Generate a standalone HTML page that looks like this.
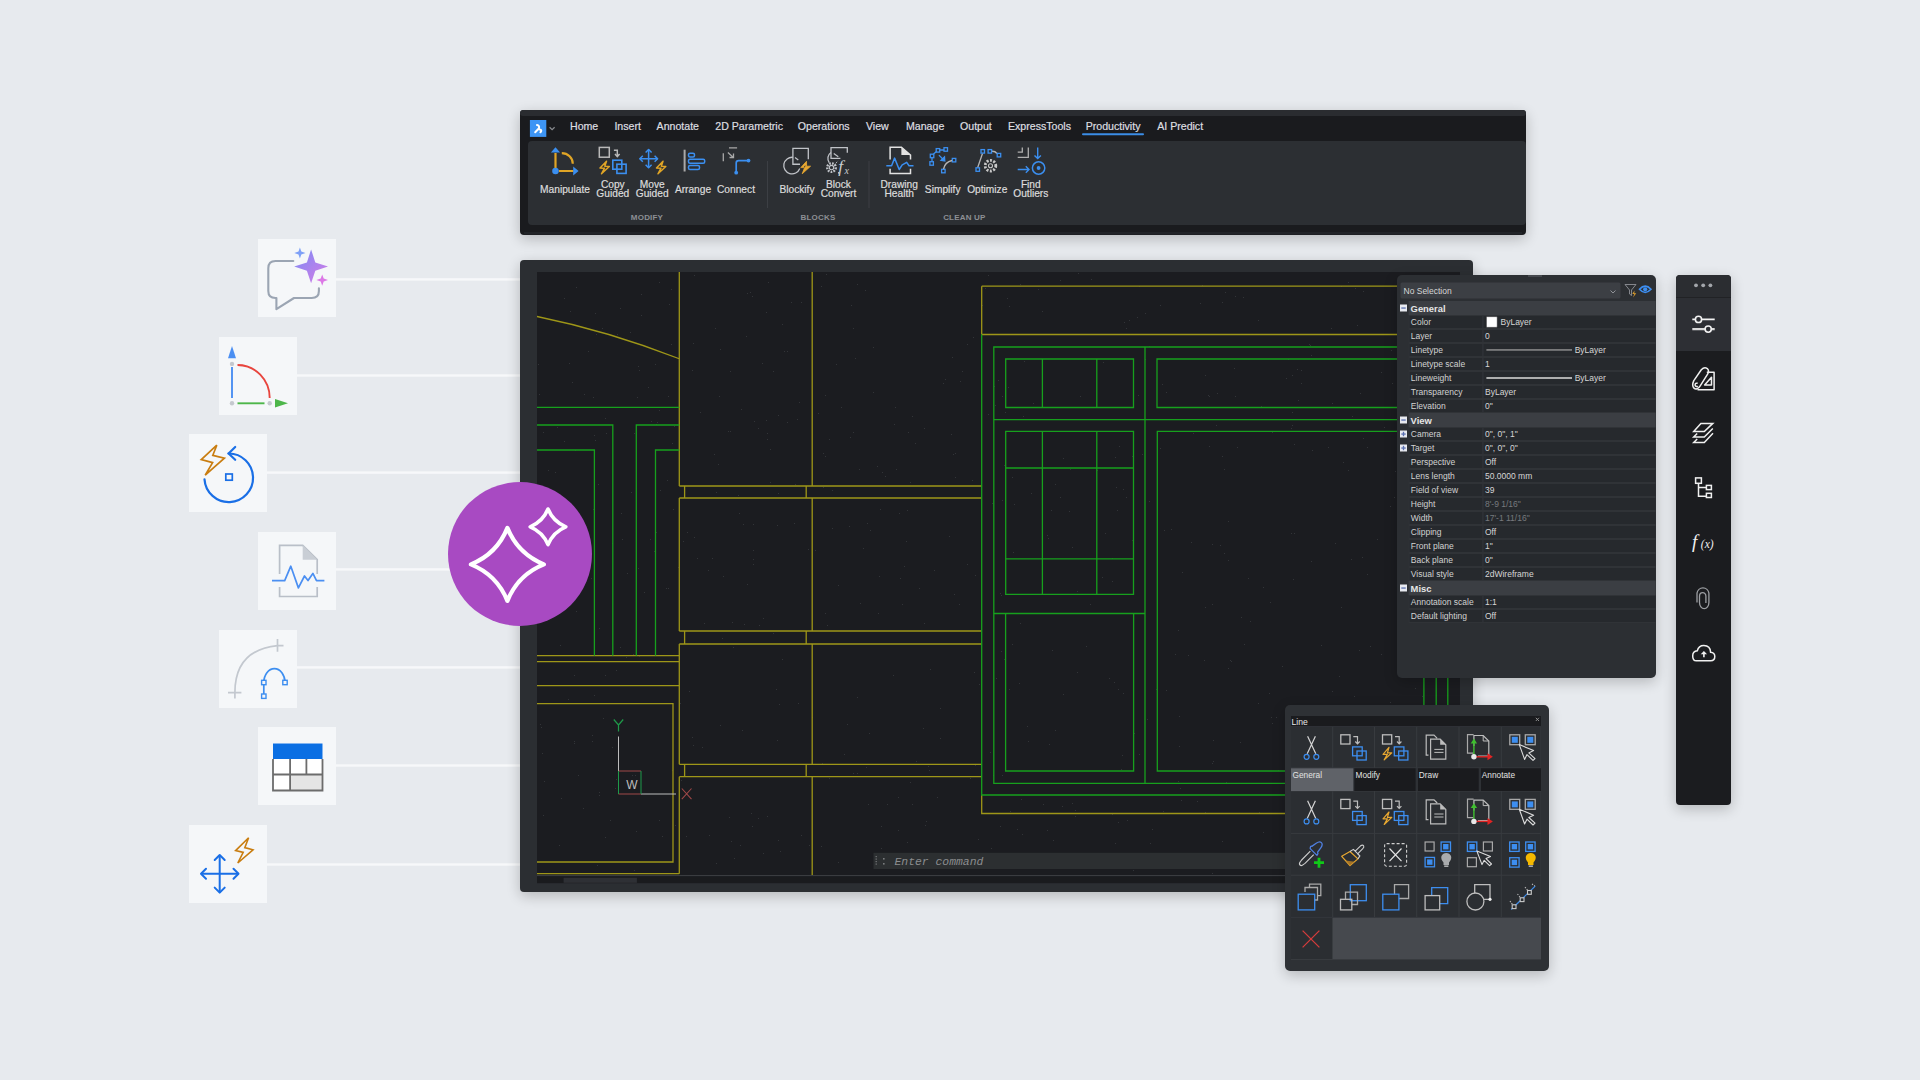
<!DOCTYPE html>
<html><head><meta charset="utf-8">
<style>
html,body{margin:0;padding:0;width:1920px;height:1080px;overflow:hidden;background:#e7eaee;}
svg{display:block;font-family:"Liberation Sans",sans-serif;}
</style></head>
<body>
<svg width="1920" height="1080" viewBox="0 0 1920 1080">
<defs>
<filter id="sh" filterUnits="userSpaceOnUse" x="0" y="0" width="1920" height="1080" color-interpolation-filters="sRGB"><feGaussianBlur in="SourceAlpha" stdDeviation="7"/><feOffset dy="4"/><feComponentTransfer><feFuncA type="linear" slope="0.22"/></feComponentTransfer><feMerge><feMergeNode/><feMergeNode in="SourceGraphic"/></feMerge></filter>
<linearGradient id="spk" x1="0" y1="0" x2="1" y2="1"><stop offset="0" stop-color="#7b8cf5"/><stop offset="1" stop-color="#d77be6"/></linearGradient>
</defs>
<rect width="1920" height="1080" fill="#e7eaee"/>

<!-- connector lines -->
<g fill="#f7f8fa">
<rect x="336" y="278.2" width="184" height="2.4"/>
<rect x="297" y="374.3" width="223" height="2.4"/>
<rect x="267" y="471.4" width="253" height="2.4"/>
<rect x="336" y="568.2" width="184" height="2.4"/>
<rect x="297" y="666.2" width="223" height="2.4"/>
<rect x="336" y="764.3" width="184" height="2.4"/>
<rect x="267" y="863.3" width="253" height="2.4"/>
</g>
<!-- tiles -->
<g fill="#f5f7f9">
<rect x="258" y="239" width="78" height="78"/>
<rect x="219" y="337" width="78" height="78"/>
<rect x="189" y="434" width="78" height="78"/>
<rect x="258" y="532" width="78" height="78"/>
<rect x="219" y="630" width="78" height="78"/>
<rect x="258" y="727" width="78" height="78"/>
<rect x="189" y="825" width="78" height="78"/>
</g>


<!-- tile icons -->
<g id="ic1">
<path d="M293.3,261 H275.5 Q268.3,261 268.3,268.2 V291 Q268.3,298 275.5,298 H276.4 V309.2 L294,298 H311.7 Q318.9,298 318.9,291 V288.3" fill="none" stroke="#9ba5b3" stroke-width="2.1" stroke-linejoin="round" stroke-linecap="round"/>
<path d="M311.1,249.4 L315.3,262.4 L328,266.6 L315.3,270.8 L311.1,283.3 L306.9,270.8 L294.2,266.6 L306.9,262.4 Z" fill="url(#spk)"/>
<path d="M299.9,247.4 L301.3,251.6 L305.5,253 L301.3,254.4 L299.9,258.6 L298.5,254.4 L294.3,253 L298.5,251.6 Z" fill="#7ea0f7"/>
<path d="M322.2,274.4 L323.7,278.6 L328,280.1 L323.7,281.6 L322.2,285.8 L320.7,281.6 L316.4,280.1 L320.7,278.6 Z" fill="#dc78e6"/>
</g>
<g id="ic2">
<path d="M232,346 L236,358.3 L228,358.3 Z" fill="#4b8ff2"/>
<circle cx="232" cy="363.9" r="2.2" fill="#c4c8ce"/>
<line x1="232" y1="367" x2="232" y2="398" stroke="#4b8ff2" stroke-width="1.9"/>
<circle cx="232" cy="403.3" r="2.2" fill="#c4c8ce"/>
<line x1="237.5" y1="403.3" x2="264.5" y2="403.3" stroke="#4db64a" stroke-width="1.9"/>
<circle cx="269.7" cy="403.3" r="2.2" fill="#c4c8ce"/>
<path d="M275,399 L288,403.3 L275,407.6 Z" fill="#4db64a"/>
<path d="M237.5,365 A32.2,33 0 0 1 269.7,398" fill="none" stroke="#e8453e" stroke-width="1.9"/>
</g>
<g id="ic3">
<path d="M228.4,453.5 A24.3,24.3 0 1 1 204.5,479.4" fill="none" stroke="#1a6fe6" stroke-width="2.2" stroke-linecap="round"/>
<path d="M235.2,447 L228.6,453.5 L235.2,459.8" fill="none" stroke="#1a6fe6" stroke-width="2.2" stroke-linecap="round" stroke-linejoin="round"/>
<rect x="225.8" y="474" width="6.5" height="6.2" fill="none" stroke="#1a6fe6" stroke-width="1.7"/>
<path d="M216.8,445.2 L201.3,459.6 L212.6,462.6 L205.2,475.2 L224.4,458.2 L212.8,455.3 Z" fill="none" stroke="#c97d10" stroke-width="1.7" stroke-linejoin="miter"/>
</g>
<g id="ic4">
<path d="M279.6,574 V545.3 H302.7 L317.2,559.7 V574 M279.6,587 V596.5 H317.2 V587" fill="none" stroke="#b9bfc8" stroke-width="1.7"/>
<path d="M302.7,545.3 L317.2,559.7 H302.7 Z" fill="#c9ced5"/>
<path d="M272,580.6 H284.7 L290.8,566.2 L298.4,587.9 L304.5,576 L308,580.6 L312.9,573.4 L316.5,580.6 H324.4" fill="none" stroke="#4b8ff2" stroke-width="1.7" stroke-linejoin="round"/>
</g>
<g id="ic5">
<path d="M234.9,692.6 Q234.9,650 277.5,645.6" fill="none" stroke="#c3c8cf" stroke-width="1.7"/>
<path d="M228,692.6 H241.4 M277.5,639 V651.8 M234.9,692 V698.5 M277,645.6 H283.5" fill="none" stroke="#c3c8cf" stroke-width="1.7"/>
<path d="M263.8,682.5 A10.6,13.8 0 0 1 285,682.5 M263.8,682.5 V696" fill="none" stroke="#3d8ef0" stroke-width="1.7"/>
<rect x="261.6" y="680.3" width="4.4" height="4.4" fill="#f5f6f8" stroke="#3d8ef0" stroke-width="1.4"/>
<rect x="282.8" y="680.3" width="4.4" height="4.4" fill="#f5f6f8" stroke="#3d8ef0" stroke-width="1.4"/>
<rect x="261.6" y="694" width="4.4" height="4.4" fill="#f5f6f8" stroke="#3d8ef0" stroke-width="1.4"/>
</g>
<g id="ic6">
<rect x="273" y="743.5" width="49.5" height="47" fill="#ffffff"/>
<rect x="273" y="743.5" width="49.5" height="15.5" fill="#0b6fe3"/>
<rect x="290.1" y="774.5" width="32.4" height="16" fill="#e5e5e5"/>
<path d="M273,759 V790.5 H322.5 V759 M273,774.5 H322.5 M290.1,759 V790.5 M306.4,759 V774.5" fill="none" stroke="#6c6c6c" stroke-width="1.8"/>
</g>
<g id="ic7">
<path d="M201,873.8 H238.5 M219.7,855 V892.6" fill="none" stroke="#1a6fe6" stroke-width="2"/>
<path d="M206,868.8 L201,873.8 L206,878.8 M233.5,868.8 L238.5,873.8 L233.5,878.8 M214.7,860 L219.7,855 L224.7,860 M214.7,887.6 L219.7,892.6 L224.7,887.6" fill="none" stroke="#1a6fe6" stroke-width="2" stroke-linecap="round" stroke-linejoin="round"/>
<path d="M248.6,837.7 L235.6,850.6 L243.2,852.4 L237.8,863 L253,849.8 L244.8,847.6 Z" fill="none" stroke="#c97d10" stroke-width="1.6"/>
</g>

<!-- RIBBON -->
<g filter="url(#sh)">
<rect x="520" y="110" width="1006" height="125" rx="4" fill="#1a1b1e"/>
</g>
<rect x="520" y="110" width="1006" height="6" rx="3" fill="#2a2c30"/>
<rect x="524" y="232" width="998" height="2.6" fill="#222428"/>
<rect x="528" y="141" width="998" height="84" rx="4" fill="#2c2f33"/>


<!-- ribbon logo & tabs -->
<rect x="529.9" y="120" width="16.4" height="16.9" fill="#3d95f5"/>
<path d="M537,125.1 Q539.6,125.3 539,128.2 L535.2,132.3 M539.6,129.6 Q541.8,129.8 541.1,131.4 L540.4,132.3" fill="none" stroke="#ffffff" stroke-width="2" stroke-linecap="round" stroke-linejoin="round"/>
<path d="M549.6,127.3 L552.1,129.6 L554.6,127.3" fill="none" stroke="#8a8c90" stroke-width="1.2"/>
<g font-size="10.6" fill="#dedfe0" stroke="#dedfe0" stroke-width="0.2">
<text x="570" y="130">Home</text>
<text x="614.4" y="130">Insert</text>
<text x="656.6" y="130">Annotate</text>
<text x="715.3" y="130">2D Parametric</text>
<text x="797.8" y="130">Operations</text>
<text x="866" y="130">View</text>
<text x="906" y="130">Manage</text>
<text x="960" y="130">Output</text>
<text x="1008" y="130">ExpressTools</text>
<text x="1085.7" y="130">Productivity</text>
<text x="1157.2" y="130">AI Predict</text>
</g>
<rect x="1082" y="133.2" width="62" height="2" rx="1" fill="#3b8de6"/>
<!-- ribbon labels -->
<g font-size="10.2" fill="#dcdcdc" stroke="#dcdcdc" stroke-width="0.2" text-anchor="middle">
<text x="565" y="192.8">Manipulate</text>
<text x="612.8" y="188.2">Copy</text><text x="612.8" y="196.8">Guided</text>
<text x="652.2" y="188.2">Move</text><text x="652.2" y="196.8">Guided</text>
<text x="693" y="192.8">Arrange</text>
<text x="736" y="192.8">Connect</text>
<text x="797" y="192.8">Blockify</text>
<text x="838.5" y="188.2">Block</text><text x="838.5" y="196.8">Convert</text>
<text x="899.2" y="188.2">Drawing</text><text x="899.2" y="196.8">Health</text>
<text x="942.7" y="192.8">Simplify</text>
<text x="987.3" y="192.8">Optimize</text>
<text x="1030.8" y="188.2">Find</text><text x="1030.8" y="196.8">Outliers</text>
</g>
<g font-size="8" font-weight="bold" fill="#8d9095" text-anchor="middle" letter-spacing="0.2">
<text x="647" y="219.8">MODIFY</text>
<text x="818" y="219.8">BLOCKS</text>
<text x="964.4" y="219.8">CLEAN UP</text>
</g>
<rect x="767" y="161" width="1" height="47" fill="#3c3f44"/>
<rect x="868.5" y="161" width="1" height="47" fill="#3c3f44"/>
<!-- ribbon icons -->
<g id="manip">
<path d="M555.5,153 V168 M559,171 H573.5" stroke="#e0a526" stroke-width="2.2" fill="none"/>
<path d="M561.8,153.2 A11,10.5 0 0 1 572.8,163.7" stroke="#e0a526" stroke-width="2.2" fill="none"/>
<path d="M555.5,147.2 L560.1,152.6 H550.9 Z M578.6,171 L573.2,175.6 V166.4 Z" fill="#3b8ff0"/>
<circle cx="555.5" cy="171" r="3.3" fill="#3b8ff0"/>
</g>
<g id="copyg">
<rect x="599.3" y="147.4" width="10" height="9.8" fill="none" stroke="#b9b9b9" stroke-width="1.5"/>
<path d="M613.9,150.3 H617.3 V156" fill="none" stroke="#b9b9b9" stroke-width="1.5"/>
<path d="M615,154 L617.3,156.6 L619.6,154" fill="none" stroke="#b9b9b9" stroke-width="1.5"/>
<path d="M606.5,161.2 L600,168 L604.5,168.2 L601.5,173.8 L609.3,166.5 L604.8,166.3 Z" fill="none" stroke="#e0a526" stroke-width="1.5" stroke-linejoin="round"/>
<rect x="612.8" y="160.2" width="9" height="9" fill="none" stroke="#3b8ff0" stroke-width="1.6"/>
<rect x="616.9" y="164.2" width="9.2" height="9.2" fill="none" stroke="#3b8ff0" stroke-width="1.6"/>
</g>
<g id="moveg">
<path d="M639.8,158.7 H657.6 M648.6,149.5 V167.8" stroke="#3b8ff0" stroke-width="1.5" fill="none"/>
<path d="M642.8,155.7 L639.8,158.7 L642.8,161.7 M654.6,155.7 L657.6,158.7 L654.6,161.7 M645.6,152.5 L648.6,149.5 L651.6,152.5 M645.6,164.8 L648.6,167.8 L651.6,164.8" stroke="#3b8ff0" stroke-width="1.5" fill="none" stroke-linejoin="round"/>
<path d="M663,161.2 L656.5,168 L661,168.2 L658,173.8 L665.8,166.5 L661.3,166.3 Z" fill="none" stroke="#e0a526" stroke-width="1.5" stroke-linejoin="round"/>
</g>
<g id="arrange">
<rect x="683.6" y="149.7" width="2" height="21.8" fill="#a9a9a9"/>
<rect x="688.5" y="153.3" width="6" height="3.6" rx="1.5" fill="none" stroke="#3b8ff0" stroke-width="1.5"/>
<rect x="688.5" y="159.3" width="16.2" height="4" rx="1.5" fill="none" stroke="#3b8ff0" stroke-width="1.5"/>
<rect x="688.5" y="165.6" width="11" height="3.8" rx="1.5" fill="none" stroke="#3b8ff0" stroke-width="1.5"/>
</g>
<g id="connect">
<path d="M729,147.8 H737.1 M723.3,153.2 V161.2 M727.9,152.6 L733.1,157.2 M733.5,153.5 V157.5 H729.5" stroke="#a9a9a9" stroke-width="1.3" fill="none"/>
<path d="M736.2,172.7 V163 Q736.2,160.6 738.6,160.6 H748.5" stroke="#3b8ff0" stroke-width="1.7" fill="none"/>
<circle cx="736.2" cy="172.7" r="1.9" fill="#3b8ff0"/><circle cx="748.5" cy="160.6" r="1.9" fill="#3b8ff0"/>
</g>
<g id="blockify">
<path d="M800,164.25 H792.9 V148.4 H808.3 V159.3" stroke="#c0c3c8" stroke-width="1.3" fill="none"/>
<path d="M792.9,157.3 A8.3,8.3 0 1 0 799.8,168.6" stroke="#c0c3c8" stroke-width="1.3" fill="none"/>
<path d="M795,157.6 L798.3,160.1" stroke="#c0c3c8" stroke-width="1.2"/>
<path d="M806.5,161.3 L800.8,167.6 L804.6,167.6 L802.2,173.8 L810.6,166.2 L806.6,166.2 Z" fill="#e8a831" stroke="#e8a831" stroke-width="0.8" stroke-linejoin="round"/>
<path d="M805.2,165.6 L804.3,167.4" stroke="#2c2f33" stroke-width="0.9"/>
</g>
<g id="blockconv">
<path d="M840.4,158.4 H831 V147.6 H847.3 V152.8" stroke="#c0c3c8" stroke-width="1.3" fill="none"/>
<path d="M831,152.5 A7.2,7.2 0 0 0 829.2,162.6" stroke="#c0c3c8" stroke-width="1.3" fill="none"/>
<path d="M833.75,153.4 L838.3,156.75" stroke="#c0c3c8" stroke-width="1.2"/>
<circle cx="831.5" cy="167.6" r="4.3" fill="none" stroke="#c0c3c8" stroke-width="2.4" stroke-dasharray="1.7 1.2"/>
<circle cx="831.5" cy="167.6" r="2.2" fill="none" stroke="#c0c3c8" stroke-width="1.1"/>
<path d="M834.6,164.7 L837.9,160.9" stroke="#c0c3c8" stroke-width="1" stroke-dasharray="1.4 1"/>
<text x="838.2" y="171.6" font-family="Liberation Serif" font-style="italic" font-size="17.5" fill="#c8cbd0">f</text>
<text x="844.6" y="173.6" font-family="Liberation Serif" font-style="italic" font-size="10" fill="#c8cbd0">x</text>
<circle cx="838.8" cy="172.8" r="0.9" fill="#c8cbd0"/>
</g>
<g id="dhealth">
<path d="M890.1,159.6 V147.3 H901.4 L910.5,155.1 V159.6 M890.1,168.7 V173.5 H910.5 V168.7" stroke="#e2e2e2" stroke-width="1.5" fill="none"/>
<path d="M901.4,147.3 L910.5,155.1 H901.4 Z" fill="#e2e2e2"/>
<path d="M886.3,165.7 H891.6 L894.6,158.1 L899.2,169.5 L902.2,164.9 L906.7,162.4 L909,165.7 H913.5" stroke="#3b8ff0" stroke-width="1.5" fill="none" stroke-linejoin="round"/>
</g>
<g id="simplify" stroke="#3b8ff0" fill="none" stroke-width="1.3">
<path d="M932,161.5 V158 M933.5,154 L936.5,151.5 M940,150 H944" />
<rect x="929.9" y="161.7" width="3.5" height="3.5"/><rect x="930.3" y="154.2" width="3.5" height="3.5"/>
<rect x="936.2" y="148.6" width="3.5" height="3.5"/><rect x="944" y="147.7" width="3.5" height="3.5"/>
<rect x="941.6" y="169.3" width="3.5" height="3.5"/><rect x="952.3" y="158.4" width="3.5" height="3.5"/>
<path d="M938.9,155.1 L943.5,159.8"/><path d="M944.8,161 L944.5,157 L941,160.3 Z" fill="#3b8ff0"/>
<path d="M943.5,169 Q945,162 952,160.5" stroke="#b5b5b5"/>
</g>
<g id="optimize">
<path d="M977.7,167.5 L982.5,153.5 M991.6,151.3 Q995,151 997,153.5" stroke="#b5b5b5" stroke-width="1.3" fill="none"/>
<g stroke="#3b8ff0" stroke-width="1.3" fill="none">
<rect x="976" y="167.8" width="3.5" height="3.5"/><rect x="981" y="149.6" width="3.5" height="3.5"/>
<rect x="988.1" y="149.6" width="3.5" height="3.5"/><rect x="997.2" y="153.4" width="3.5" height="3.5"/>
</g>
<circle cx="990.5" cy="165.7" r="5.3" fill="none" stroke="#c8c8c8" stroke-width="2.8" stroke-dasharray="2 1.4"/>
<circle cx="990.5" cy="165.7" r="2" fill="none" stroke="#c8c8c8" stroke-width="1.1"/>
</g>
<g id="findout">
<path d="M1017.7,152.1 H1022.3 V147.6 M1017.7,157.4 H1028.3 V147.6" stroke="#b0b0b0" stroke-width="1.3" fill="none"/>
<path d="M1037.7,147.6 V158.5 M1034.5,155.4 L1037.7,158.6 L1040.9,155.4 M1017.7,169.5 H1029 M1025.8,166.3 L1029,169.5 L1025.8,172.7" stroke="#3b8ff0" stroke-width="1.4" fill="none"/>
<circle cx="1038.6" cy="168" r="6.2" fill="none" stroke="#3b8ff0" stroke-width="1.5"/>
<circle cx="1038.6" cy="168" r="1.9" fill="#3b8ff0"/>
</g>

<!-- CANVAS PANEL -->
<g filter="url(#sh)">
<rect x="520" y="260" width="953" height="632" rx="4" fill="#2b2e32"/>
</g>
<rect x="537" y="272" width="923" height="604" fill="#1b1c20"/>


<!-- canvas drawing -->
<svg x="537" y="272" width="923" height="612" viewBox="537 272 923 612" overflow="hidden">
<path d="M836 364h1v1h-1zM1137 317h1v1h-1zM1031 493h1v1h-1zM591 578h1v1h-1zM572 534h1v1h-1zM602 328h1v1h-1zM929 770h1v1h-1zM652 407h1v1h-1zM1115 843h1v1h-1zM1069 511h1v1h-1zM1436 301h1v1h-1zM1328 447h1v1h-1zM671 344h1v1h-1zM822 763h1v1h-1zM704 623h1v1h-1zM1126 497h1v1h-1zM1042 311h1v1h-1zM593 397h1v1h-1zM1164 530h1v1h-1zM827 625h1v1h-1zM955 453h1v1h-1zM1269 693h1v1h-1zM763 618h1v1h-1zM1021 799h1v1h-1zM1209 446h1v1h-1zM1440 344h1v1h-1zM923 728h1v1h-1zM678 567h1v1h-1zM574 675h1v1h-1zM1241 617h1v1h-1zM1343 462h1v1h-1zM1178 630h1v1h-1zM1072 547h1v1h-1zM1311 841h1v1h-1zM974 672h1v1h-1zM594 695h1v1h-1zM1133 870h1v1h-1zM1294 444h1v1h-1zM893 675h1v1h-1zM559 550h1v1h-1zM693 343h1v1h-1zM592 735h1v1h-1zM657 422h1v1h-1zM898 797h1v1h-1zM612 543h1v1h-1zM1043 804h1v1h-1zM1292 792h1v1h-1zM794 523h1v1h-1zM868 804h1v1h-1zM1419 364h1v1h-1zM700 412h1v1h-1zM753 564h1v1h-1zM1080 431h1v1h-1zM542 525h1v1h-1zM878 613h1v1h-1zM1415 688h1v1h-1zM1012 644h1v1h-1zM1160 305h1v1h-1zM1366 742h1v1h-1zM1343 753h1v1h-1zM899 513h1v1h-1zM633 654h1v1h-1zM595 313h1v1h-1zM730 371h1v1h-1zM851 305h1v1h-1zM538 364h1v1h-1zM631 492h1v1h-1zM561 798h1v1h-1zM1103 362h1v1h-1zM770 482h1v1h-1zM873 347h1v1h-1zM1319 870h1v1h-1zM967 564h1v1h-1zM617 334h1v1h-1zM853 432h1v1h-1zM1301 370h1v1h-1zM559 845h1v1h-1zM1024 361h1v1h-1zM1038 289h1v1h-1zM1024 861h1v1h-1zM1332 691h1v1h-1zM778 493h1v1h-1zM692 737h1v1h-1zM1028 741h1v1h-1zM841 407h1v1h-1zM1285 865h1v1h-1zM1322 757h1v1h-1zM1291 718h1v1h-1zM747 584h1v1h-1zM865 290h1v1h-1zM564 441h1v1h-1zM776 689h1v1h-1zM1418 542h1v1h-1zM1400 867h1v1h-1zM1417 492h1v1h-1zM741 409h1v1h-1zM719 396h1v1h-1zM1112 814h1v1h-1zM1311 561h1v1h-1zM1139 754h1v1h-1zM616 670h1v1h-1zM1375 743h1v1h-1zM1228 560h1v1h-1zM702 747h1v1h-1zM844 754h1v1h-1zM1432 511h1v1h-1zM907 842h1v1h-1zM1205 375h1v1h-1zM655 364h1v1h-1zM1370 758h1v1h-1zM672 770h1v1h-1zM1440 668h1v1h-1zM860 603h1v1h-1zM659 282h1v1h-1zM1431 663h1v1h-1zM1022 834h1v1h-1zM937 797h1v1h-1zM1298 400h1v1h-1zM770 449h1v1h-1zM759 625h1v1h-1zM777 525h1v1h-1zM659 820h1v1h-1zM863 548h1v1h-1zM1075 816h1v1h-1zM925 825h1v1h-1zM1000 593h1v1h-1zM1020 284h1v1h-1zM943 383h1v1h-1zM542 753h1v1h-1zM697 558h1v1h-1zM1205 607h1v1h-1zM838 585h1v1h-1zM1049 744h1v1h-1zM636 610h1v1h-1zM767 439h1v1h-1zM1248 578h1v1h-1zM1055 730h1v1h-1zM1377 539h1v1h-1zM1102 577h1v1h-1zM1009 689h1v1h-1zM954 594h1v1h-1zM978 839h1v1h-1zM1181 800h1v1h-1zM1405 429h1v1h-1zM1053 840h1v1h-1zM1311 355h1v1h-1zM650 539h1v1h-1zM605 418h1v1h-1zM605 675h1v1h-1zM1259 812h1v1h-1zM680 703h1v1h-1zM1145 359h1v1h-1zM1350 854h1v1h-1zM740 845h1v1h-1zM904 566h1v1h-1zM1449 773h1v1h-1zM687 532h1v1h-1zM1012 477h1v1h-1zM718 464h1v1h-1zM1202 285h1v1h-1zM1048 538h1v1h-1zM555 472h1v1h-1zM1112 581h1v1h-1zM597 865h1v1h-1zM1263 857h1v1h-1zM634 433h1v1h-1zM574 741h1v1h-1zM787 351h1v1h-1zM926 821h1v1h-1zM1291 428h1v1h-1zM675 825h1v1h-1zM1063 694h1v1h-1zM620 308h1v1h-1zM1171 529h1v1h-1zM605 837h1v1h-1zM1122 755h1v1h-1zM615 788h1v1h-1zM599 792h1v1h-1zM955 477h1v1h-1zM1047 830h1v1h-1zM784 351h1v1h-1zM1023 416h1v1h-1zM639 370h1v1h-1zM584 394h1v1h-1zM825 456h1v1h-1zM1237 447h1v1h-1zM998 380h1v1h-1zM857 284h1v1h-1zM768 282h1v1h-1zM1212 604h1v1h-1zM712 558h1v1h-1zM1398 337h1v1h-1zM1291 533h1v1h-1zM993 775h1v1h-1zM900 578h1v1h-1zM1171 863h1v1h-1zM853 773h1v1h-1zM1188 655h1v1h-1zM910 482h1v1h-1zM588 351h1v1h-1zM603 718h1v1h-1zM773 371h1v1h-1zM616 779h1v1h-1zM1339 676h1v1h-1zM797 419h1v1h-1zM808 549h1v1h-1zM683 541h1v1h-1zM780 851h1v1h-1zM1433 602h1v1h-1zM763 853h1v1h-1zM823 487h1v1h-1zM539 502h1v1h-1zM975 575h1v1h-1zM723 576h1v1h-1zM543 432h1v1h-1zM621 513h1v1h-1zM576 287h1v1h-1zM818 413h1v1h-1zM1077 591h1v1h-1zM1228 668h1v1h-1zM1197 801h1v1h-1zM896 469h1v1h-1zM1444 363h1v1h-1zM1204 660h1v1h-1zM578 775h1v1h-1zM1359 650h1v1h-1zM1213 761h1v1h-1zM666 588h1v1h-1zM1002 775h1v1h-1zM1278 770h1v1h-1zM1075 810h1v1h-1zM1166 690h1v1h-1zM750 292h1v1h-1zM660 490h1v1h-1zM635 775h1v1h-1zM1052 650h1v1h-1zM1114 682h1v1h-1zM988 275h1v1h-1zM1272 723h1v1h-1zM1001 595h1v1h-1zM1145 313h1v1h-1zM1216 425h1v1h-1zM606 433h1v1h-1zM1209 396h1v1h-1zM1219 859h1v1h-1zM992 503h1v1h-1zM979 684h1v1h-1zM1244 644h1v1h-1zM1129 320h1v1h-1zM674 426h1v1h-1zM1222 456h1v1h-1zM1060 280h1v1h-1zM594 435h1v1h-1zM1156 689h1v1h-1zM1160 448h1v1h-1zM1013 552h1v1h-1zM967 344h1v1h-1zM1360 393h1v1h-1zM1438 836h1v1h-1zM554 549h1v1h-1zM1292 855h1v1h-1zM951 434h1v1h-1zM731 841h1v1h-1zM732 622h1v1h-1zM668 588h1v1h-1zM1415 353h1v1h-1zM1293 579h1v1h-1zM1354 696h1v1h-1zM751 813h1v1h-1zM985 288h1v1h-1zM541 569h1v1h-1zM953 454h1v1h-1zM667 480h1v1h-1zM829 778h1v1h-1zM540 724h1v1h-1zM1310 345h1v1h-1zM1390 702h1v1h-1zM1367 447h1v1h-1zM880 509h1v1h-1zM1457 627h1v1h-1zM870 530h1v1h-1zM791 302h1v1h-1zM632 775h1v1h-1zM801 835h1v1h-1zM767 433h1v1h-1zM1008 387h1v1h-1zM881 848h1v1h-1zM1352 761h1v1h-1zM1118 822h1v1h-1zM1403 603h1v1h-1zM1200 303h1v1h-1zM1212 544h1v1h-1zM1230 660h1v1h-1zM801 302h1v1h-1zM1391 350h1v1h-1zM972 480h1v1h-1zM812 717h1v1h-1zM1436 429h1v1h-1zM1142 454h1v1h-1zM1051 510h1v1h-1zM692 370h1v1h-1zM729 817h1v1h-1zM995 405h1v1h-1zM1372 872h1v1h-1zM952 357h1v1h-1zM715 328h1v1h-1zM853 328h1v1h-1zM758 428h1v1h-1zM1062 806h1v1h-1zM1228 521h1v1h-1zM919 588h1v1h-1zM885 476h1v1h-1zM595 440h1v1h-1zM1428 349h1v1h-1zM1001 651h1v1h-1zM1332 403h1v1h-1zM787 422h1v1h-1zM906 541h1v1h-1zM1416 783h1v1h-1zM1341 286h1v1h-1zM568 699h1v1h-1zM1362 557h1v1h-1zM1078 273h1v1h-1zM898 830h1v1h-1zM1298 787h1v1h-1zM1432 422h1v1h-1zM638 366h1v1h-1zM1019 683h1v1h-1zM1404 707h1v1h-1zM1134 733h1v1h-1zM959 604h1v1h-1zM574 743h1v1h-1zM752 826h1v1h-1zM1132 456h1v1h-1zM656 424h1v1h-1zM1123 693h1v1h-1zM641 315h1v1h-1zM1020 623h1v1h-1zM895 407h1v1h-1zM1091 279h1v1h-1zM815 550h1v1h-1zM1420 660h1v1h-1zM1351 559h1v1h-1zM754 421h1v1h-1zM1422 696h1v1h-1zM821 286h1v1h-1zM996 678h1v1h-1zM924 428h1v1h-1zM1152 829h1v1h-1zM747 293h1v1h-1zM849 526h1v1h-1zM1166 392h1v1h-1zM1271 717h1v1h-1zM1002 396h1v1h-1zM1430 460h1v1h-1zM1292 412h1v1h-1zM742 730h1v1h-1zM809 845h1v1h-1zM994 386h1v1h-1zM743 524h1v1h-1zM1150 843h1v1h-1zM673 509h1v1h-1zM734 858h1v1h-1zM669 304h1v1h-1zM593 509h1v1h-1zM1364 804h1v1h-1zM1212 873h1v1h-1zM1395 471h1v1h-1zM709 835h1v1h-1zM1225 292h1v1h-1zM1149 501h1v1h-1zM882 472h1v1h-1zM694 275h1v1h-1zM795 484h1v1h-1zM1417 347h1v1h-1zM1425 398h1v1h-1zM866 767h1v1h-1zM1294 533h1v1h-1zM583 558h1v1h-1zM881 826h1v1h-1zM716 492h1v1h-1zM1363 291h1v1h-1zM916 761h1v1h-1zM1243 297h1v1h-1zM570 311h1v1h-1zM1384 427h1v1h-1zM1226 813h1v1h-1zM850 437h1v1h-1zM1419 644h1v1h-1zM779 704h1v1h-1zM829 439h1v1h-1zM541 727h1v1h-1zM1381 654h1v1h-1zM1406 288h1v1h-1zM753 559h1v1h-1zM1418 846h1v1h-1zM894 424h1v1h-1zM934 570h1v1h-1zM1392 383h1v1h-1zM1276 717h1v1h-1zM1295 737h1v1h-1zM1097 470h1v1h-1zM832 490h1v1h-1zM1258 320h1v1h-1zM720 725h1v1h-1zM766 312h1v1h-1zM569 605h1v1h-1zM838 862h1v1h-1zM1351 867h1v1h-1zM782 324h1v1h-1zM627 573h1v1h-1zM1191 542h1v1h-1zM753 524h1v1h-1zM1109 678h1v1h-1zM1226 782h1v1h-1zM1149 346h1v1h-1zM1312 450h1v1h-1zM1060 497h1v1h-1zM1217 393h1v1h-1zM766 420h1v1h-1zM679 804h1v1h-1zM1070 469h1v1h-1zM902 869h1v1h-1zM1005 412h1v1h-1zM1282 666h1v1h-1zM1450 335h1v1h-1zM975 765h1v1h-1zM1311 823h1v1h-1zM575 450h1v1h-1zM648 387h1v1h-1zM1433 623h1v1h-1zM1394 497h1v1h-1zM1335 543h1v1h-1zM777 740h1v1h-1zM1408 337h1v1h-1zM1086 646h1v1h-1zM738 495h1v1h-1zM668 396h1v1h-1zM773 633h1v1h-1zM1138 395h1v1h-1zM548 470h1v1h-1zM1162 384h1v1h-1zM825 395h1v1h-1zM1270 602h1v1h-1zM596 334h1v1h-1zM902 604h1v1h-1zM1126 328h1v1h-1zM689 691h1v1h-1zM915 443h1v1h-1zM821 846h1v1h-1zM825 613h1v1h-1zM867 523h1v1h-1zM1333 872h1v1h-1zM873 392h1v1h-1zM1208 395h1v1h-1zM543 815h1v1h-1zM928 766h1v1h-1zM912 804h1v1h-1zM962 371h1v1h-1zM552 604h1v1h-1zM1127 820h1v1h-1zM620 647h1v1h-1zM879 576h1v1h-1zM672 443h1v1h-1zM1017 829h1v1h-1zM638 568h1v1h-1zM1278 854h1v1h-1zM720 349h1v1h-1zM1406 859h1v1h-1zM982 305h1v1h-1zM1390 506h1v1h-1zM1370 646h1v1h-1zM1297 369h1v1h-1zM1261 406h1v1h-1zM910 782h1v1h-1zM1301 383h1v1h-1zM739 513h1v1h-1zM1014 504h1v1h-1zM651 421h1v1h-1zM1205 812h1v1h-1zM576 611h1v1h-1zM1235 296h1v1h-1zM1309 344h1v1h-1zM1090 604h1v1h-1zM1115 457h1v1h-1zM924 623h1v1h-1zM930 669h1v1h-1zM949 536h1v1h-1zM560 645h1v1h-1zM988 414h1v1h-1zM1240 742h1v1h-1zM960 381h1v1h-1zM973 337h1v1h-1zM656 532h1v1h-1zM622 539h1v1h-1zM1007 298h1v1h-1zM1124 322h1v1h-1zM1213 740h1v1h-1zM1009 306h1v1h-1zM1002 500h1v1h-1zM1413 355h1v1h-1zM1327 872h1v1h-1zM1212 763h1v1h-1zM716 863h1v1h-1zM991 848h1v1h-1zM1381 372h1v1h-1zM1263 832h1v1h-1zM598 484h1v1h-1zM1234 368h1v1h-1zM1363 438h1v1h-1zM1288 359h1v1h-1zM1000 826h1v1h-1zM730 431h1v1h-1zM1004 465h1v1h-1zM572 382h1v1h-1zM686 836h1v1h-1zM1163 811h1v1h-1zM693 745h1v1h-1zM644 592h1v1h-1zM1123 489h1v1h-1zM1341 607h1v1h-1zM1072 803h1v1h-1zM634 870h1v1h-1zM1117 510h1v1h-1zM1272 432h1v1h-1zM1449 620h1v1h-1zM869 733h1v1h-1zM945 379h1v1h-1zM1222 302h1v1h-1zM1292 425h1v1h-1zM1126 864h1v1h-1zM1077 672h1v1h-1zM826 274h1v1h-1zM569 363h1v1h-1zM1105 533h1v1h-1zM1010 811h1v1h-1zM659 410h1v1h-1zM1139 286h1v1h-1zM540 486h1v1h-1zM636 488h1v1h-1zM744 624h1v1h-1zM1080 396h1v1h-1zM1112 558h1v1h-1zM662 836h1v1h-1zM762 363h1v1h-1zM626 657h1v1h-1zM1340 743h1v1h-1zM908 432h1v1h-1zM549 661h1v1h-1zM1055 484h1v1h-1zM1132 540h1v1h-1zM1400 714h1v1h-1zM767 816h1v1h-1zM578 592h1v1h-1zM912 416h1v1h-1zM592 741h1v1h-1zM549 604h1v1h-1zM1404 359h1v1h-1zM722 638h1v1h-1zM1004 659h1v1h-1zM1286 378h1v1h-1zM823 453h1v1h-1zM583 808h1v1h-1zM1258 703h1v1h-1zM544 781h1v1h-1zM1224 553h1v1h-1zM1220 545h1v1h-1zM746 336h1v1h-1zM752 296h1v1h-1zM847 724h1v1h-1zM1178 781h1v1h-1zM1193 433h1v1h-1zM1047 535h1v1h-1zM1263 587h1v1h-1zM782 659h1v1h-1zM1426 403h1v1h-1zM1348 282h1v1h-1zM778 415h1v1h-1zM1222 841h1v1h-1zM1224 469h1v1h-1zM1348 470h1v1h-1zM758 818h1v1h-1zM1118 689h1v1h-1zM1150 861h1v1h-1zM970 778h1v1h-1zM1180 788h1v1h-1zM940 708h1v1h-1zM1063 458h1v1h-1zM733 647h1v1h-1zM610 820h1v1h-1zM671 289h1v1h-1zM636 831h1v1h-1zM855 358h1v1h-1zM564 298h1v1h-1zM1175 654h1v1h-1zM1179 716h1v1h-1zM599 628h1v1h-1zM872 764h1v1h-1zM1292 809h1v1h-1zM599 795h1v1h-1zM1379 841h1v1h-1zM637 397h1v1h-1zM641 294h1v1h-1zM1318 761h1v1h-1zM1121 769h1v1h-1zM1119 446h1v1h-1zM630 332h1v1h-1zM1235 396h1v1h-1zM832 528h1v1h-1zM557 427h1v1h-1zM798 703h1v1h-1zM877 466h1v1h-1zM1425 576h1v1h-1zM1321 645h1v1h-1zM567 521h1v1h-1zM940 738h1v1h-1zM857 697h1v1h-1zM1033 403h1v1h-1zM1331 328h1v1h-1zM1292 375h1v1h-1zM539 394h1v1h-1zM1239 861h1v1h-1zM542 568h1v1h-1zM990 752h1v1h-1zM708 570h1v1h-1zM857 773h1v1h-1zM778 840h1v1h-1zM799 402h1v1h-1zM1182 572h1v1h-1zM639 656h1v1h-1zM612 747h1v1h-1zM1179 746h1v1h-1zM1116 487h1v1h-1zM907 510h1v1h-1zM1357 325h1v1h-1zM1355 288h1v1h-1zM728 431h1v1h-1zM1367 574h1v1h-1zM887 804h1v1h-1zM753 550h1v1h-1zM1027 726h1v1h-1zM1231 661h1v1h-1zM859 469h1v1h-1zM681 780h1v1h-1zM1147 719h1v1h-1zM694 537h1v1h-1zM1250 621h1v1h-1zM654 551h1v1h-1zM1352 416h1v1h-1zM714 454h1v1h-1z" fill="#3c3e43" opacity="0.7"/>
<g fill="none" stroke="#9e9618" stroke-width="1.3">
<path d="M537,316.5 Q608,331 679.3,358.75"/>
<path d="M679.3,272 V486 M812.2,272 V486 M679.3,498 V631 M812.2,498 V631 M679.3,644 V764.3 M812.2,644 V764.3 M679.3,776.7 V873.7 M812.2,776.7 V876"/>
<path d="M679.3,486 H981.7 M679.3,498 H981.7 M684.6,486 V498 M806.2,486 V498"/>
<path d="M679.3,631 H981.7 M679.3,644 H981.7 M684.6,631 V644 M806.2,631 V644"/>
<path d="M679.3,764.3 H981.7 M679.3,776.7 H981.7 M684.6,764.3 V776.7 M806.2,764.3 V776.7"/>
<path d="M981.7,286.2 V334.5 M981.7,286.2 H1460 M981.7,334.5 H1460"/>
<path d="M981.7,795 V813.5 H1460"/>
<path d="M537,655.7 H679.3 M537,661.7 H679.3 M537,685.7 H679.3 M537,873.7 H679.3"/>
<path d="M537,703.7 H673 V862 H537"/>
</g>
<g fill="none" stroke="#17a01d" stroke-width="1.3">
<path d="M537,407.3 H679.3"/>
<path d="M537,425 H612.8 V655.7 M636.3,655.7 V425 H679.3"/>
<path d="M537,450 H594.4 V655.7 M655.5,655.7 V450 H679.3"/>
<path d="M981.7,334.5 V795 H1460"/>
<path d="M1460,347 H993.8 V783.3 H1460 M1145,347 V783.3 M993.8,419.7 H1460"/>
<path d="M1005.7,359 H1133.5 V407.5 H1005.7 Z M1042.4,359 V407.5 M1096.8,359 V407.5"/>
<path d="M1460,359 H1157 V407.5 H1460"/>
<path d="M1005.7,431.3 H1133.5 V594.3 H1005.7 Z M1005.7,468 H1133.5 M1005.7,558.8 H1133.5 M1042.4,431.3 V594.3 M1096.8,431.3 V594.3"/>
<path d="M993.8,613.5 H1145 M1005.6,613.5 V771 H1133.6 V613.5"/>
<path d="M1460,431.3 H1157.3 V771 H1460"/>
<path d="M1423.9,660 V705 M1436.2,660 V705 M1447.8,660 V705"/>
</g>
<!-- UCS -->
<g fill="none" stroke-width="1">
<path d="M618.5,736.5 V771 M641,794 H676" stroke="#bdbdbd"/>
<path d="M618.5,771 H641 M618.5,794 H641" stroke="#a04848"/>
<path d="M618.5,771 V794 M641,771 V794" stroke="#1f9a4a"/>
<path d="M613.8,719.5 L618.5,725 L623.2,719.5 M618.5,725 V731.5" stroke="#1f9a4a" stroke-width="1.2"/>
<path d="M681.8,788.5 L691.5,799.2 M691.5,788.5 L681.8,799.2" stroke="#a04848" stroke-width="1.1"/>
</g>
<text x="626.3" y="788.5" font-size="12" fill="#bdbdbd">W</text>
<!-- command line -->
<rect x="873.5" y="852.8" width="600" height="16.2" fill="#2c2f31"/>
<g fill="#7a7c7e"><rect x="875.6" y="856" width="1.2" height="1.2"/><rect x="875.6" y="858.5" width="1.2" height="1.2"/><rect x="875.6" y="861" width="1.2" height="1.2"/><rect x="875.6" y="863.5" width="1.2" height="1.2"/>
<rect x="883" y="858" width="1.6" height="1.6"/><rect x="883" y="863" width="1.6" height="1.6"/></g>
<text x="894.5" y="865" font-family="Liberation Mono" font-style="italic" font-size="11.4" fill="#8b8d8f">Enter command</text>
<!-- bottom scroll -->
<rect x="537" y="875" width="923" height="1.2" fill="#3a3c40"/>
<rect x="537" y="876.2" width="923" height="7" fill="#1a1b1e"/>
<rect x="563.6" y="877.8" width="73.3" height="5" fill="#2e3035"/>
</svg>

<!-- PROPERTIES -->
<g filter="url(#sh)"><rect x="1397" y="275" width="259" height="403" rx="5" fill="#2c2f33"/></g>
<rect x="1528" y="275" width="14" height="2" fill="#45484d"/>
<rect x="1400.5" y="282.6" width="220" height="16" rx="1.5" fill="#3c3f44"/>
<text x="1403.5" y="293.6" font-size="8.5" fill="#d6d6d6">No Selection</text>
<path d="M1610.5,290.5 L1613,293 L1615.5,290.5" fill="none" stroke="#9a9da2" stroke-width="0.9"/>
<path d="M1625,284.5 H1636 L1631.5,290 V295.5 L1629.5,294 V290 Z" fill="none" stroke="#8e9196" stroke-width="0.9"/>
<path d="M1634.5,290.5 L1632.3,294 H1634.3 L1633,297.5 L1636.3,293.2 H1634.3 Z" fill="#d89a2a"/>
<path d="M1639.5,289.3 Q1645.2,283 1651,289.3 Q1645.2,295.6 1639.5,289.3 Z" fill="none" stroke="#3d8ef0" stroke-width="1.6"/>
<circle cx="1645.2" cy="289.3" r="2.1" fill="#3d8ef0"/>
<rect x="1408.6" y="301" width="247" height="322" fill="#303337"/>
<rect x="1408.6" y="301" width="247" height="14" fill="#3b3e43"/>
<rect x="1400" y="304.5" width="7" height="7" fill="#e8eaf0"/><rect x="1401.3" y="307.4" width="4.4" height="1.3" fill="#5a6fb0"/>
<text x="1410.6" y="311.5" font-size="9.4" font-weight="bold" fill="#e6e6e6">General</text>
<rect x="1409.6" y="316" width="72.6" height="12" fill="#26292d"/>
<rect x="1483.6" y="316" width="172" height="12" fill="#26292d"/>
<text x="1410.8" y="325" font-size="8.5" fill="#d2d2d2">Color</text>
<rect x="1486.3" y="316.6" width="11" height="10.8" rx="1" fill="#ffffff" stroke="#1c1d20" stroke-width="0.6"/>
<text x="1500.5" y="325" font-size="8.5" fill="#d6d6d6">ByLayer</text>
<rect x="1409.6" y="330" width="72.6" height="12" fill="#26292d"/>
<rect x="1483.6" y="330" width="172" height="12" fill="#26292d"/>
<text x="1410.8" y="339" font-size="8.5" fill="#d2d2d2">Layer</text>
<text x="1485" y="339" font-size="8.5" fill="#d6d6d6">0</text>
<rect x="1409.6" y="344" width="72.6" height="12" fill="#26292d"/>
<rect x="1483.6" y="344" width="172" height="12" fill="#26292d"/>
<text x="1410.8" y="353" font-size="8.5" fill="#d2d2d2">Linetype</text>
<rect x="1486.4" y="349.4" width="85.6" height="1.1" fill="#b0b0b0"/>
<text x="1574.7" y="353" font-size="8.5" fill="#d6d6d6">ByLayer</text>
<rect x="1409.6" y="358" width="72.6" height="12" fill="#26292d"/>
<rect x="1483.6" y="358" width="172" height="12" fill="#26292d"/>
<text x="1410.8" y="367" font-size="8.5" fill="#d2d2d2">Linetype scale</text>
<text x="1485" y="367" font-size="8.5" fill="#d6d6d6">1</text>
<rect x="1409.6" y="372" width="72.6" height="12" fill="#26292d"/>
<rect x="1483.6" y="372" width="172" height="12" fill="#26292d"/>
<text x="1410.8" y="381" font-size="8.5" fill="#d2d2d2">Lineweight</text>
<rect x="1486.4" y="377.2" width="85.6" height="1.6" fill="#d0d0d0"/>
<text x="1574.7" y="381" font-size="8.5" fill="#d6d6d6">ByLayer</text>
<rect x="1409.6" y="386" width="72.6" height="12" fill="#26292d"/>
<rect x="1483.6" y="386" width="172" height="12" fill="#26292d"/>
<text x="1410.8" y="395" font-size="8.5" fill="#d2d2d2">Transparency</text>
<text x="1485" y="395" font-size="8.5" fill="#d6d6d6">ByLayer</text>
<rect x="1409.6" y="400" width="72.6" height="12" fill="#26292d"/>
<rect x="1483.6" y="400" width="172" height="12" fill="#26292d"/>
<text x="1410.8" y="409" font-size="8.5" fill="#d2d2d2">Elevation</text>
<text x="1485" y="409" font-size="8.5" fill="#d6d6d6">0&quot;</text>
<rect x="1408.6" y="413" width="247" height="14" fill="#3b3e43"/>
<rect x="1400" y="416.5" width="7" height="7" fill="#e8eaf0"/><rect x="1401.3" y="419.4" width="4.4" height="1.3" fill="#5a6fb0"/>
<text x="1410.6" y="423.5" font-size="9.4" font-weight="bold" fill="#e6e6e6">View</text>
<rect x="1409.6" y="428" width="72.6" height="12" fill="#26292d"/>
<rect x="1483.6" y="428" width="172" height="12" fill="#26292d"/>
<text x="1410.8" y="437" font-size="8.5" fill="#d2d2d2">Camera</text>
<rect x="1400" y="430.5" width="7" height="7" fill="#e8eaf0"/><rect x="1401.3" y="433.4" width="4.4" height="1.3" fill="#5a6fb0"/><rect x="1402.85" y="431.8" width="1.3" height="4.4" fill="#5a6fb0"/>
<text x="1485" y="437" font-size="8.5" fill="#d6d6d6">0&quot;, 0&quot;, 1&quot;</text>
<rect x="1409.6" y="442" width="72.6" height="12" fill="#26292d"/>
<rect x="1483.6" y="442" width="172" height="12" fill="#26292d"/>
<text x="1410.8" y="451" font-size="8.5" fill="#d2d2d2">Target</text>
<rect x="1400" y="444.5" width="7" height="7" fill="#e8eaf0"/><rect x="1401.3" y="447.4" width="4.4" height="1.3" fill="#5a6fb0"/><rect x="1402.85" y="445.8" width="1.3" height="4.4" fill="#5a6fb0"/>
<text x="1485" y="451" font-size="8.5" fill="#d6d6d6">0&quot;, 0&quot;, 0&quot;</text>
<rect x="1409.6" y="456" width="72.6" height="12" fill="#26292d"/>
<rect x="1483.6" y="456" width="172" height="12" fill="#26292d"/>
<text x="1410.8" y="465" font-size="8.5" fill="#d2d2d2">Perspective</text>
<text x="1485" y="465" font-size="8.5" fill="#d6d6d6">Off</text>
<rect x="1409.6" y="470" width="72.6" height="12" fill="#26292d"/>
<rect x="1483.6" y="470" width="172" height="12" fill="#26292d"/>
<text x="1410.8" y="479" font-size="8.5" fill="#d2d2d2">Lens length</text>
<text x="1485" y="479" font-size="8.5" fill="#d6d6d6">50.0000 mm</text>
<rect x="1409.6" y="484" width="72.6" height="12" fill="#26292d"/>
<rect x="1483.6" y="484" width="172" height="12" fill="#26292d"/>
<text x="1410.8" y="493" font-size="8.5" fill="#d2d2d2">Field of view</text>
<text x="1485" y="493" font-size="8.5" fill="#d6d6d6">39</text>
<rect x="1409.6" y="498" width="72.6" height="12" fill="#26292d"/>
<rect x="1483.6" y="498" width="172" height="12" fill="#26292d"/>
<text x="1410.8" y="507" font-size="8.5" fill="#d2d2d2">Height</text>
<text x="1485" y="507" font-size="8.5" fill="#76797d">8'-9 1/16&quot;</text>
<rect x="1409.6" y="512" width="72.6" height="12" fill="#26292d"/>
<rect x="1483.6" y="512" width="172" height="12" fill="#26292d"/>
<text x="1410.8" y="521" font-size="8.5" fill="#d2d2d2">Width</text>
<text x="1485" y="521" font-size="8.5" fill="#76797d">17'-1 11/16&quot;</text>
<rect x="1409.6" y="526" width="72.6" height="12" fill="#26292d"/>
<rect x="1483.6" y="526" width="172" height="12" fill="#26292d"/>
<text x="1410.8" y="535" font-size="8.5" fill="#d2d2d2">Clipping</text>
<text x="1485" y="535" font-size="8.5" fill="#d6d6d6">Off</text>
<rect x="1409.6" y="540" width="72.6" height="12" fill="#26292d"/>
<rect x="1483.6" y="540" width="172" height="12" fill="#26292d"/>
<text x="1410.8" y="549" font-size="8.5" fill="#d2d2d2">Front plane</text>
<text x="1485" y="549" font-size="8.5" fill="#d6d6d6">1&quot;</text>
<rect x="1409.6" y="554" width="72.6" height="12" fill="#26292d"/>
<rect x="1483.6" y="554" width="172" height="12" fill="#26292d"/>
<text x="1410.8" y="563" font-size="8.5" fill="#d2d2d2">Back plane</text>
<text x="1485" y="563" font-size="8.5" fill="#d6d6d6">0&quot;</text>
<rect x="1409.6" y="568" width="72.6" height="12" fill="#26292d"/>
<rect x="1483.6" y="568" width="172" height="12" fill="#26292d"/>
<text x="1410.8" y="577" font-size="8.5" fill="#d2d2d2">Visual style</text>
<text x="1485" y="577" font-size="8.5" fill="#d6d6d6">2dWireframe</text>
<rect x="1408.6" y="581" width="247" height="14" fill="#3b3e43"/>
<rect x="1400" y="584.5" width="7" height="7" fill="#e8eaf0"/><rect x="1401.3" y="587.4" width="4.4" height="1.3" fill="#5a6fb0"/>
<text x="1410.6" y="591.5" font-size="9.4" font-weight="bold" fill="#e6e6e6">Misc</text>
<rect x="1409.6" y="596" width="72.6" height="12" fill="#26292d"/>
<rect x="1483.6" y="596" width="172" height="12" fill="#26292d"/>
<text x="1410.8" y="605" font-size="8.5" fill="#d2d2d2">Annotation scale</text>
<text x="1485" y="605" font-size="8.5" fill="#d6d6d6">1:1</text>
<rect x="1409.6" y="610" width="72.6" height="12" fill="#26292d"/>
<rect x="1483.6" y="610" width="172" height="12" fill="#26292d"/>
<text x="1410.8" y="619" font-size="8.5" fill="#d2d2d2">Default lighting</text>
<text x="1485" y="619" font-size="8.5" fill="#d6d6d6">Off</text>

<!-- RIGHT TOOLBAR -->
<g filter="url(#sh)"><rect x="1676" y="275" width="55" height="530" rx="4" fill="#1b1c1f"/></g>
<path d="M1676,297 V279 Q1676,275 1680,275 H1727 Q1731,275 1731,279 V297 Z" fill="#2b2d31"/>
<rect x="1676" y="297" width="55" height="1" fill="#212225"/>
<rect x="1676" y="298" width="55" height="53" fill="#2d2f34"/>
<g fill="#a3a6ab"><circle cx="1696" cy="285.3" r="1.9"/><circle cx="1703.2" cy="285.3" r="1.9"/><circle cx="1710.4" cy="285.3" r="1.9"/></g>
<g stroke="#f2f2f2" fill="none">
<path d="M1692.3,319.4 H1695.3 M1701.7,319.4 H1714.7" stroke-width="1.6"/>
<circle cx="1698.5" cy="319.4" r="3.1" stroke-width="1.6"/>
<path d="M1692.3,329.1 H1705 M1711.4,329.1 H1714.7" stroke-width="2.2" stroke="#d9d9d9"/>
<circle cx="1708.2" cy="329.1" r="3.1" stroke-width="1.6"/>
</g>
<g stroke="#f0f0f0" fill="none" stroke-width="1.5" stroke-linejoin="round">
<path d="M1697.5,389.8 H1714.1 V372.3 H1706.8"/>
<path d="M1711.5,377.2 V385.1 H1704.6 Z"/>
<path d="M1693.8,380.6 L1701.3,369.8 Q1704.3,366.6 1707.3,368.6 Q1709.6,371 1707.6,374.2 L1700.2,385.8 Q1697,390.6 1694,388.2 Q1691.5,385.5 1693.8,380.6 Z"/>
<path d="M1697.7,383.3 Q1695.2,382.6 1695.1,385 Q1695.6,387.2 1697.9,386.4"/>
</g>
<g stroke="#f0f0f0" fill="none" stroke-width="1.5" stroke-linejoin="miter">
<path d="M1700.9,423.4 H1712.8 L1704.3,431.5 H1693.7 Z"/>
<path d="M1697.2,433.5 L1693.7,437 H1704.3 L1712.8,428.5"/>
<path d="M1697.2,439 L1693.7,442.6 H1704.3 L1713,433.2"/>
</g>
<g stroke="#f0f0f0" fill="none" stroke-width="1.5">
<rect x="1695.6" y="477.9" width="5.8" height="5.4"/>
<path d="M1698.5,483.3 V496.3 H1706.4 M1698.5,487.5 H1706.4"/>
<rect x="1706.4" y="485.4" width="5" height="4.2"/>
<rect x="1706.4" y="493.3" width="5" height="4.2"/>
</g>
<text x="1692" y="547.5" font-family="Liberation Serif" font-style="italic" font-size="19" fill="#f0f0f0">f</text>
<text x="1700.8" y="547.5" font-family="Liberation Serif" font-style="italic" font-size="11.5" fill="#f0f0f0">(x)</text>
<path d="M1697,602.5 V593.2 A6,6.1 0 0 1 1708.9,593.2 V602.6 A4.7,6.1 0 0 1 1699.5,602.6 V596.2 A3.2,3.6 0 0 1 1705.9,596.2 V603" fill="none" stroke="#9c9ea2" stroke-width="1.3"/>
<path d="M1696.3,660.8 H1710.7 Q1714.8,660.8 1714.8,656.6 Q1714.8,652.4 1710.6,652.2 Q1710.4,645.4 1703.8,645.4 Q1698.6,645.4 1697.3,650.8 Q1692.7,651.2 1692.7,655.9 Q1692.7,660.8 1696.3,660.8 Z" fill="none" stroke="#f0f0f0" stroke-width="1.5"/>
<path d="M1703.9,657.2 V653.2" stroke="#f0f0f0" stroke-width="1.6"/>
<path d="M1700.7,654.3 L1703.9,651 L1707.1,654.3 Z" fill="#f0f0f0"/>


<!-- QUAD -->
<g filter="url(#sh)"><rect x="1285" y="705" width="264" height="266" rx="5" fill="#2e3135"/></g>
<rect x="1291" y="716" width="250" height="10.4" fill="#1a1b1e"/>
<text x="1291.5" y="724.6" font-size="8.6" fill="#e8e8e8">Line</text>
<path d="M1535.8,717.8 L1539,721 M1539,717.8 L1535.8,721" stroke="#9a9a9a" stroke-width="0.9"/>
<rect x="1291" y="726.4" width="250" height="41.5" fill="#383b3f"/>
<rect x="1291" y="791" width="250" height="126.4" fill="#383b3f"/>
<rect x="1291.0" y="726.9" width="41.2" height="40.5" fill="#2b2e32"/>
<rect x="1333.2" y="726.9" width="40.8" height="40.5" fill="#2b2e32"/>
<rect x="1375.0" y="726.9" width="41.2" height="40.5" fill="#2b2e32"/>
<rect x="1417.2" y="726.9" width="41.3" height="40.5" fill="#2b2e32"/>
<rect x="1459.5" y="726.9" width="41.3" height="40.5" fill="#2b2e32"/>
<rect x="1501.8" y="726.9" width="38.7" height="40.5" fill="#2b2e32"/>
<rect x="1291.0" y="791.5" width="41.2" height="41.4" fill="#2b2e32"/>
<rect x="1333.2" y="791.5" width="40.8" height="41.4" fill="#2b2e32"/>
<rect x="1375.0" y="791.5" width="41.2" height="41.4" fill="#2b2e32"/>
<rect x="1417.2" y="791.5" width="41.3" height="41.4" fill="#2b2e32"/>
<rect x="1459.5" y="791.5" width="41.3" height="41.4" fill="#2b2e32"/>
<rect x="1501.8" y="791.5" width="38.7" height="41.4" fill="#2b2e32"/>
<rect x="1291.0" y="833.9" width="41.2" height="40.8" fill="#2b2e32"/>
<rect x="1333.2" y="833.9" width="40.8" height="40.8" fill="#2b2e32"/>
<rect x="1375.0" y="833.9" width="41.2" height="40.8" fill="#2b2e32"/>
<rect x="1417.2" y="833.9" width="41.3" height="40.8" fill="#2b2e32"/>
<rect x="1459.5" y="833.9" width="41.3" height="40.8" fill="#2b2e32"/>
<rect x="1501.8" y="833.9" width="38.7" height="40.8" fill="#2b2e32"/>
<rect x="1291.0" y="875.7" width="41.2" height="41.2" fill="#2b2e32"/>
<rect x="1333.2" y="875.7" width="40.8" height="41.2" fill="#2b2e32"/>
<rect x="1375.0" y="875.7" width="41.2" height="41.2" fill="#2b2e32"/>
<rect x="1417.2" y="875.7" width="41.3" height="41.2" fill="#2b2e32"/>
<rect x="1459.5" y="875.7" width="41.3" height="41.2" fill="#2b2e32"/>
<rect x="1501.8" y="875.7" width="38.7" height="41.2" fill="#2b2e32"/>
<rect x="1291" y="768.3" width="62.3" height="22.7" fill="#5f6268"/>
<rect x="1354.4" y="768.3" width="61.2" height="22.7" fill="#1a1b1e"/>
<rect x="1418" y="768.3" width="60.7" height="22.7" fill="#1a1b1e"/>
<rect x="1481" y="768.3" width="60" height="22.7" fill="#1a1b1e"/>
<g font-size="8.3" fill="#e2e2e2"><text x="1292.5" y="778.2">General</text><text x="1355.5" y="778.2">Modify</text><text x="1418.8" y="778.2">Draw</text><text x="1481.8" y="778.2">Annotate</text></g>
<rect x="1291" y="917.4" width="250" height="42.6" fill="#383b3f"/>
<rect x="1291" y="917.9" width="41.2" height="41.1" fill="#2b2e32"/>
<rect x="1332.7" y="917.9" width="208.3" height="41.1" fill="#46494e"/>
<path d="M1302.6,930.6 L1319.4,947.4 M1319.4,930.6 L1302.6,947.4" stroke="#d43c3c" stroke-width="1.3"/>
<g transform="translate(0,0)">
<path d="M1307.6,736.2 L1315.8,753.8 M1315.4,736.2 L1307.2,753.8" stroke="#d5d5d5" stroke-width="1.2" fill="none"/>
<circle cx="1306.6" cy="756.8" r="2.5" fill="none" stroke="#3d8ef0" stroke-width="1.2"/><circle cx="1316.3" cy="756.8" r="2.5" fill="none" stroke="#3d8ef0" stroke-width="1.2"/>
<g transform="translate(0,0)">
<rect x="1340.8" y="734.8" width="9.2" height="9.2" fill="none" stroke="#bdbdbd" stroke-width="1.3"/>
<path d="M1353.3,736.6 H1357.5 V743.5 M1355.3,741.5 L1357.5,743.8 L1359.7,741.5" fill="none" stroke="#bdbdbd" stroke-width="1.2"/>
<rect x="1352.6" y="746.9" width="9.6" height="8.9" fill="none" stroke="#3d8ef0" stroke-width="1.3"/>
<rect x="1357" y="751" width="9.2" height="9" fill="none" stroke="#3d8ef0" stroke-width="1.3"/>
</g>
<g transform="translate(41.7,0)">
<rect x="1340.8" y="734.8" width="9.2" height="9.2" fill="none" stroke="#bdbdbd" stroke-width="1.3"/>
<path d="M1353.3,736.6 H1357.5 V743.5 M1355.3,741.5 L1357.5,743.8 L1359.7,741.5" fill="none" stroke="#bdbdbd" stroke-width="1.2"/>
<rect x="1352.6" y="746.9" width="9.6" height="8.9" fill="none" stroke="#3d8ef0" stroke-width="1.3"/>
<rect x="1357" y="751" width="9.2" height="9" fill="none" stroke="#3d8ef0" stroke-width="1.3"/>
</g>
<path d="M1389,747.4 L1383,754.3 L1387.4,754.3 L1384.2,759.9 L1391.8,752.8 L1387.4,752.8 Z" fill="none" stroke="#e8a831" stroke-width="1.2" stroke-linejoin="round"/>
<path d="M1428.5,755.1 H1426.2 V735.2 H1434 L1437.2,738.4" fill="none" stroke="#bdbdbd" stroke-width="1.2"/>
<path d="M1430.6,759.2 V739.2 H1440.2 L1445.8,744.8 V759.2 Z" fill="#2b2e32" stroke="#bdbdbd" stroke-width="1.2"/>
<path d="M1440.2,739.2 L1445.8,744.8 H1440.2 Z" fill="#bdbdbd"/>
<path d="M1434.3,749.4 H1443.5 M1434.3,752.4 H1443.5" stroke="#bdbdbd" stroke-width="1"/>
<path d="M1473.6,753.1 H1467.5 V734.6 H1473.6" fill="none" stroke="#a9a9a9" stroke-width="1.2"/>
<path d="M1473.9,746 V735.5 H1483.2 L1488.8,741 V756 H1478" fill="none" stroke="#bdbdbd" stroke-width="1.2"/>
<path d="M1483.2,735.5 V741 H1488.8" fill="none" stroke="#bdbdbd" stroke-width="1"/>
<path d="M1473.9,755.8 V742" stroke="#3fc02f" stroke-width="1.4"/><path d="M1470.7,743.5 L1473.9,738.6 L1477.1,743.5 Z" fill="#3fc02f"/>
<path d="M1474,756.8 H1488.5" stroke="#e02424" stroke-width="1.4"/><path d="M1487.5,753.3 L1492.9,756.8 L1487.5,760.3 Z" fill="#e02424"/>
<circle cx="1473.9" cy="756.8" r="2.7" fill="#e8e8e8"/>
<rect x="1509.8" y="734.8" width="9.9" height="9.9" fill="none" stroke="#a9a9a9" stroke-width="1.3"/><rect x="1511.8" y="736.8" width="6" height="6" fill="#3d8ef0"/>
<rect x="1525.3" y="734.8" width="9.9" height="9.9" fill="none" stroke="#a9a9a9" stroke-width="1.3"/><rect x="1527.3" y="736.8" width="6" height="6" fill="#3d8ef0"/>
<path d="M1519.3,744.6 L1533.6,750.6 L1528.8,752.9 L1535,758.6 L1533,760.4 L1527,754.6 L1524.6,759.4 Z" fill="#2b2e32" stroke="#dcdcdc" stroke-width="1.1" stroke-linejoin="round"/>
</g>
<g transform="translate(0,64.60000000000002)">
<path d="M1307.6,736.2 L1315.8,753.8 M1315.4,736.2 L1307.2,753.8" stroke="#d5d5d5" stroke-width="1.2" fill="none"/>
<circle cx="1306.6" cy="756.8" r="2.5" fill="none" stroke="#3d8ef0" stroke-width="1.2"/><circle cx="1316.3" cy="756.8" r="2.5" fill="none" stroke="#3d8ef0" stroke-width="1.2"/>
<g transform="translate(0,0)">
<rect x="1340.8" y="734.8" width="9.2" height="9.2" fill="none" stroke="#bdbdbd" stroke-width="1.3"/>
<path d="M1353.3,736.6 H1357.5 V743.5 M1355.3,741.5 L1357.5,743.8 L1359.7,741.5" fill="none" stroke="#bdbdbd" stroke-width="1.2"/>
<rect x="1352.6" y="746.9" width="9.6" height="8.9" fill="none" stroke="#3d8ef0" stroke-width="1.3"/>
<rect x="1357" y="751" width="9.2" height="9" fill="none" stroke="#3d8ef0" stroke-width="1.3"/>
</g>
<g transform="translate(41.7,0)">
<rect x="1340.8" y="734.8" width="9.2" height="9.2" fill="none" stroke="#bdbdbd" stroke-width="1.3"/>
<path d="M1353.3,736.6 H1357.5 V743.5 M1355.3,741.5 L1357.5,743.8 L1359.7,741.5" fill="none" stroke="#bdbdbd" stroke-width="1.2"/>
<rect x="1352.6" y="746.9" width="9.6" height="8.9" fill="none" stroke="#3d8ef0" stroke-width="1.3"/>
<rect x="1357" y="751" width="9.2" height="9" fill="none" stroke="#3d8ef0" stroke-width="1.3"/>
</g>
<path d="M1389,747.4 L1383,754.3 L1387.4,754.3 L1384.2,759.9 L1391.8,752.8 L1387.4,752.8 Z" fill="none" stroke="#e8a831" stroke-width="1.2" stroke-linejoin="round"/>
<path d="M1428.5,755.1 H1426.2 V735.2 H1434 L1437.2,738.4" fill="none" stroke="#bdbdbd" stroke-width="1.2"/>
<path d="M1430.6,759.2 V739.2 H1440.2 L1445.8,744.8 V759.2 Z" fill="#2b2e32" stroke="#bdbdbd" stroke-width="1.2"/>
<path d="M1440.2,739.2 L1445.8,744.8 H1440.2 Z" fill="#bdbdbd"/>
<path d="M1434.3,749.4 H1443.5 M1434.3,752.4 H1443.5" stroke="#bdbdbd" stroke-width="1"/>
<path d="M1473.6,753.1 H1467.5 V734.6 H1473.6" fill="none" stroke="#a9a9a9" stroke-width="1.2"/>
<path d="M1473.9,746 V735.5 H1483.2 L1488.8,741 V756 H1478" fill="none" stroke="#bdbdbd" stroke-width="1.2"/>
<path d="M1483.2,735.5 V741 H1488.8" fill="none" stroke="#bdbdbd" stroke-width="1"/>
<path d="M1473.9,755.8 V742" stroke="#3fc02f" stroke-width="1.4"/><path d="M1470.7,743.5 L1473.9,738.6 L1477.1,743.5 Z" fill="#3fc02f"/>
<path d="M1474,756.8 H1488.5" stroke="#e02424" stroke-width="1.4"/><path d="M1487.5,753.3 L1492.9,756.8 L1487.5,760.3 Z" fill="#e02424"/>
<circle cx="1473.9" cy="756.8" r="2.7" fill="#e8e8e8"/>
<rect x="1509.8" y="734.8" width="9.9" height="9.9" fill="none" stroke="#a9a9a9" stroke-width="1.3"/><rect x="1511.8" y="736.8" width="6" height="6" fill="#3d8ef0"/>
<rect x="1525.3" y="734.8" width="9.9" height="9.9" fill="none" stroke="#a9a9a9" stroke-width="1.3"/><rect x="1527.3" y="736.8" width="6" height="6" fill="#3d8ef0"/>
<path d="M1519.3,744.6 L1533.6,750.6 L1528.8,752.9 L1535,758.6 L1533,760.4 L1527,754.6 L1524.6,759.4 Z" fill="#2b2e32" stroke="#dcdcdc" stroke-width="1.1" stroke-linejoin="round"/>
</g>
<g>
<path d="M1310.3,851.2 L1301.6,860 L1300.6,861.4 Q1298.6,863.6 1300,865 Q1301.4,866.4 1303.6,864.4 L1305,863.4 L1313.7,854.6" fill="none" stroke="#cfcfcf" stroke-width="1.1" stroke-linejoin="round"/>
<path d="M1310.2,848.6 L1317,855.4 Q1318.6,853.6 1317.6,852.2 L1320.8,847.8 Q1323.2,844.4 1321.4,842.6 Q1319.6,840.8 1316.2,843.2 L1311.8,846.4 Q1310.4,845.4 1310.2,848.6 Z" fill="none" stroke="#4f7fe0" stroke-width="1.3" stroke-linejoin="round"/>
<path d="M1319,857.7 V867.7 M1314,862.7 H1324" stroke="#10c818" stroke-width="2.8"/>
<path d="M1350,851.5 L1341.7,856.3 L1350,865.5 L1357.9,858.9 Z" fill="none" stroke="#e8a831" stroke-width="1.2" stroke-linejoin="round"/>
<path d="M1345.5,860.4 L1354.6,861.7 L1350,865.5 Z" fill="#b07a25" opacity="0.9"/>
<path d="M1350,851.5 L1353.4,849.4 L1359.9,855.9 L1357.9,858.9 M1353.4,849.4 L1355.2,851.2 L1360.6,845.8 Q1362.6,844.4 1363.6,845.8 Q1364.4,847.2 1362.8,848.6 L1357.6,853.8 L1359.2,855.4" fill="none" stroke="#cfcfcf" stroke-width="1.1" stroke-linejoin="round"/>
<rect x="1384.6" y="843.6" width="22" height="22.6" rx="2" fill="none" stroke="#cfcfcf" stroke-width="1.1" stroke-dasharray="3 2"/>
<path d="M1389.5,848.5 L1401.5,861.2 M1401.5,848.5 L1389.5,861.2" stroke="#e6e6e6" stroke-width="1.2"/>
<rect x="1425.1" y="842" width="9" height="9" fill="none" stroke="#a9a9a9" stroke-width="1.2"/>
<rect x="1441.1" y="842" width="9.4" height="9.4" fill="none" stroke="#3d8ef0" stroke-width="1.3"/><rect x="1443.1" y="844" width="5.4" height="5.4" fill="#3d8ef0"/>
<rect x="1425.1" y="857.4" width="9.4" height="9.4" fill="none" stroke="#3d8ef0" stroke-width="1.3"/><rect x="1427.1" y="859.4" width="5.4" height="5.4" fill="#3d8ef0"/>
<path d="M1443.5,862.5 Q1440.5,859 1441.5,856 Q1443,853 1446.3,853 Q1449.6,853 1451,856 Q1452,859 1449,862.5 V865 H1443.5 Z" fill="#a9abad"/><rect x="1444.2" y="865.4" width="4.2" height="1.6" fill="#a9abad"/>
<rect x="1467.4" y="842" width="9.4" height="9.4" fill="none" stroke="#3d8ef0" stroke-width="1.3"/><rect x="1469.4" y="844" width="5.4" height="5.4" fill="#3d8ef0"/>
<rect x="1483.4" y="842" width="9" height="9" fill="none" stroke="#a9a9a9" stroke-width="1.2"/>
<rect x="1467.4" y="857.7" width="9" height="9" fill="none" stroke="#a9a9a9" stroke-width="1.2"/>
<path d="M1476.9,851.1 L1490.5,856.5 L1486,858.6 L1491.5,864 L1489.6,865.7 L1484.2,860.3 L1482,864.6 Z" fill="#2b2e32" stroke="#dcdcdc" stroke-width="1.1" stroke-linejoin="round"/>
<rect x="1509.7" y="842" width="9.4" height="9.4" fill="none" stroke="#3d8ef0" stroke-width="1.3"/><rect x="1511.7" y="844" width="5.4" height="5.4" fill="#3d8ef0"/>
<rect x="1525.7" y="842" width="9.4" height="9.4" fill="none" stroke="#3d8ef0" stroke-width="1.3"/><rect x="1527.7" y="844" width="5.4" height="5.4" fill="#3d8ef0"/>
<rect x="1509.7" y="857.7" width="9.4" height="9.4" fill="none" stroke="#3d8ef0" stroke-width="1.3"/><rect x="1511.7" y="859.7" width="5.4" height="5.4" fill="#3d8ef0"/>
<path d="M1528,862.5 Q1525,859 1526,856 Q1527.5,853 1530.8,853 Q1534.1,853 1535.5,856 Q1536.5,859 1533.5,862.5 V865 H1528 Z" fill="#f5b800"/><rect x="1528.7" y="865.4" width="4.2" height="1.6" fill="#a9abad"/>
</g>
<g fill="none" stroke-width="1.3">
<path d="M1305,892 V887.5 H1317.5 V900 H1314.7 M1309.5,888 V884.2 H1320.8 V895.7 H1317.5" stroke="#a9a9a9"/>
<rect x="1298.2" y="894.2" width="16.5" height="15.7" stroke="#3d8ef0"/>
<rect x="1350.3" y="884.7" width="16" height="16" stroke="#3d8ef0"/>
<path d="M1345.5,899 V892.2 H1357.5 V904.5 H1351.8" stroke="#a9a9a9"/>
<rect x="1340.5" y="899.3" width="11.3" height="10.6" stroke="#bdbdbd"/>
<path d="M1394.5,894.2 V884.7 H1408.6 V898.5 H1398.9" stroke="#a9a9a9"/>
<rect x="1382.8" y="894.2" width="16.1" height="15.7" stroke="#3d8ef0"/>
<path d="M1431.7,895.6 V887.6 H1447.7 V903.6 H1439.7" stroke="#3d8ef0"/>
<rect x="1425.1" y="895.6" width="14.6" height="14.3" stroke="#bdbdbd"/>
<path d="M1474.7,893 V884.7 H1490 V899.3 H1483.5" stroke="#bdbdbd"/>
<circle cx="1475.4" cy="901.5" r="8.5" stroke="#bdbdbd"/>
</g>
<circle cx="1490" cy="899.3" r="1.6" fill="#f0f0f0"/>
<g>
<path d="M1511.2,909.5 L1535.2,886.1" stroke="#3d8ef0" stroke-width="1.2"/>
<path d="M1510,901 L1514,906.6 M1517.5,894 L1522.1,899.7 M1525,887.2 L1529.4,892.4 M1532,884 L1535,886" stroke="#b9b9b9" stroke-width="1.1" stroke-dasharray="1.3 1.3"/>
<rect x="1512.2" y="904.8" width="3.8" height="3.8" fill="#2b2e32" stroke="#c9c9c9" stroke-width="1.1"/>
<rect x="1520.2" y="897.8" width="3.8" height="3.8" fill="#2b2e32" stroke="#c9c9c9" stroke-width="1.1"/>
<rect x="1527.5" y="890.5" width="3.8" height="3.8" fill="#2b2e32" stroke="#c9c9c9" stroke-width="1.1"/>
</g>

<!-- PURPLE CIRCLE -->
<circle cx="520" cy="554" r="72" fill="#a84ac2"/>
<g fill="none" stroke="#ffffff" stroke-linejoin="round">
<path d="M507.4,527.9 Q517.9,553.9 543.9,564.4 Q517.9,574.9 507.4,600.9 Q496.9,574.9 470.9,564.4 Q496.9,553.9 507.4,527.9 Z" stroke-width="4.2"/>
<path d="M548,508.99999999999994 Q553.2,521.5999999999999 565.8,526.8 Q553.2,532.0 548,544.5999999999999 Q542.8,532.0 530.2,526.8 Q542.8,521.5999999999999 548,508.99999999999994 Z" stroke-width="3.6"/>
</g>
</svg>
</body></html>
